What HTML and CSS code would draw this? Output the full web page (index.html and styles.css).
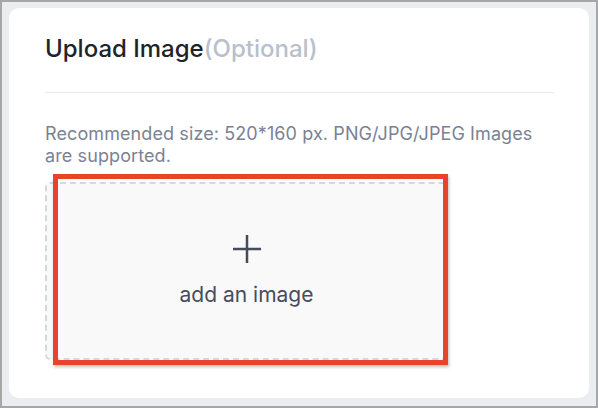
FILE: index.html
```html
<!DOCTYPE html>
<html>
<head>
<meta charset="utf-8">
<link rel="stylesheet" href="styles.css">
</head>
<body>
<div class="frame">
  <div class="card">
    <h2 class="title">Upload Image<span class="optional">(Optional)</span></h2>
    <div class="divider"></div>
    <p class="hint">Recommended size: 520*160 px. PNG/JPG/JPEG Images are supported.</p>
    <div class="upload-wrap">
      <div class="upload">
        <svg class="plus" width="28" height="28" viewBox="0 0 28 28"><path d="M14 0V28M0 14H28" stroke="#464c5b" stroke-width="2.5" fill="none"/></svg>
        <span class="upload-label">add an image</span>
      </div>
      <div class="highlight"></div>
    </div>
  </div>
</div>
</body>
</html>
```
FILE: styles.css
```css
* { box-sizing: border-box; }
html, body { margin: 0; padding: 0; }
body { width: 598px; height: 408px; font-family: Inter, "Noto Sans", sans-serif; }
.frame {
  width: 598px; height: 408px;
  border: 2px solid #a7a7a7;
  background: #ebedf0;
  padding: 6px 7px 8px 7px;
}
.card {
  background: #fff;
  border-radius: 10px;
  height: 100%;
  padding: 0 35px 0 36px;
  display: flex;
  flex-direction: column;
}
.title {
  margin: 0;
  padding-top: 26px;
  font-size: 24px;
  line-height: 30px;
  font-weight: 500;
  color: #202327;
}
.optional { color: #b9bfcc; font-weight: 500; }
.divider {
  margin-top: 28px;
  height: 1px;
  background: #e9e9ea;
}
.hint {
  margin: 30px 0 0 0;
  font-size: 18px;
  line-height: 22px;
  letter-spacing: 0.1px;
  color: #7a8294;
}
.upload-wrap {
  position: relative;
  margin-top: 15px;
  width: 403px;
  height: 178px;
}
.upload {
  width: 100%; height: 100%;
  border: 2px dashed #d0d9e2;
  border-radius: 5px;
  background: #f9f9f9;
  display: flex;
  flex-direction: column;
  align-items: center;
  justify-content: center;
}
.plus { display: block; }
.upload-label {
  margin-top: 20px;
  font-size: 21px;
  line-height: 24px;
  color: #474d5c;
}
.highlight {
  position: absolute;
  left: 8px; top: -8px;
  width: 395px; height: 191px;
  border: 5px solid #e8432b;
  box-shadow: 1px 2px 3px rgba(0,0,0,0.25);
}
```
